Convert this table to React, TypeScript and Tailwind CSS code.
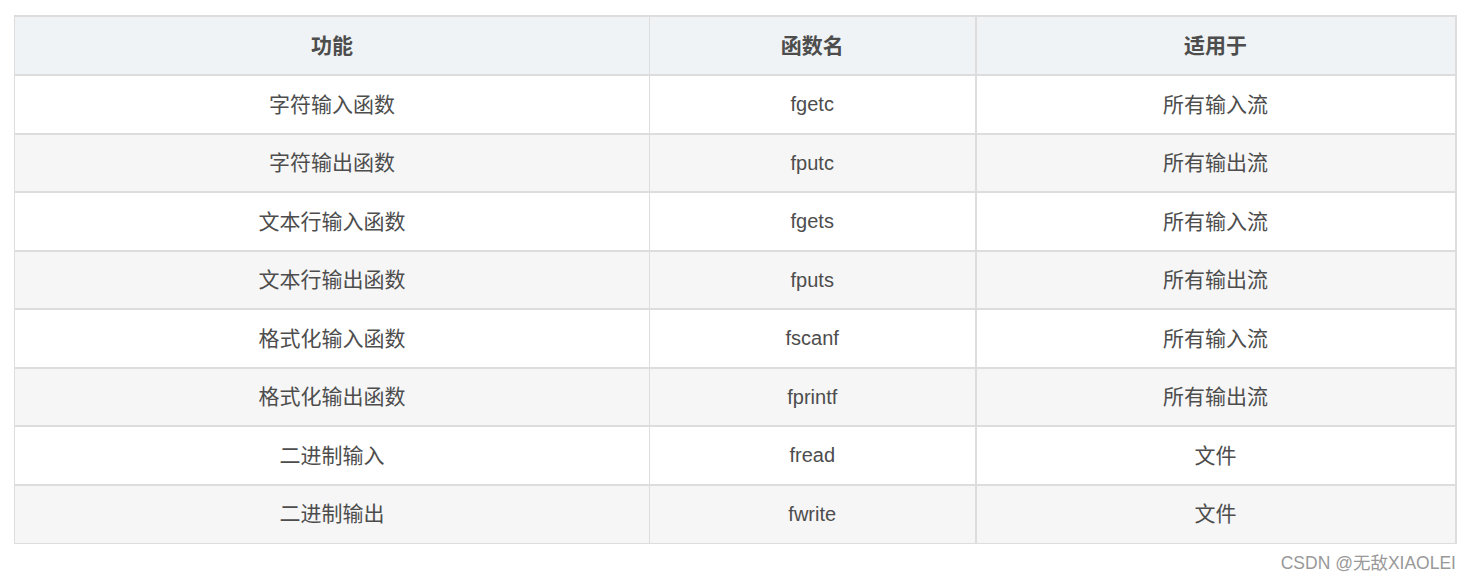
import React from "react";

const rows: [string, string, string][] = [
  ["字符输入函数", "fgetc", "所有输入流"],
  ["字符输出函数", "fputc", "所有输出流"],
  ["文本行输入函数", "fgets", "所有输入流"],
  ["文本行输出函数", "fputs", "所有输出流"],
  ["格式化输入函数", "fscanf", "所有输入流"],
  ["格式化输出函数", "fprintf", "所有输出流"],
  ["二进制输入", "fread", "文件"],
  ["二进制输出", "fwrite", "文件"],
];

export default function App() {
  return (
    <div
      className="w-[1470px] h-[579px] bg-white relative"
      style={{ fontFamily: '"Liberation Sans", Arial, "Noto Sans CJK SC", sans-serif' }}
    >
      <div className="pt-[15px] pl-[14px]">
        <table className="border-collapse w-[1441px] text-[20px] text-[#4d4d4d] table-fixed">
          <colgroup>
            <col className="w-[635px]" />
            <col className="w-[326px]" />
            <col className="w-[480px]" />
          </colgroup>
          <thead>
            <tr className="h-[59px] bg-[#eff3f5]">
              <th className="border-t-2 border-b border-l border-r border-[#dddddd] font-bold text-[21px]">功能</th>
              <th className="border-t-2 border-b border-r-2 border-[#dddddd] font-bold text-[21px]">函数名</th>
              <th className="border-t-2 border-b border-r-2 border-[#dddddd] font-bold text-[21px]">适用于</th>
            </tr>
          </thead>
          <tbody>
            {rows.map((r, i) => (
              <tr key={i} className={i % 2 === 0 ? "h-[58.5px] bg-white" : "h-[58.5px] bg-[#f6f6f6]"}>
                <td className="border-t-2 border-b border-l border-r border-[#dddddd] text-center font-normal text-[21px]">{r[0]}</td>
                <td className="border-t-2 border-b border-r-2 border-[#dddddd] text-center">{r[1]}</td>
                <td className="border-t-2 border-b border-r-2 border-[#dddddd] text-center text-[21px]">{r[2]}</td>
              </tr>
            ))}
          </tbody>
        </table>
      </div>
      <div className="flex justify-end pr-[14px] pt-[6px] text-[17.5px] text-[#999999]">
        CSDN @无敌XIAOLEI
      </div>
    </div>
  );
}
